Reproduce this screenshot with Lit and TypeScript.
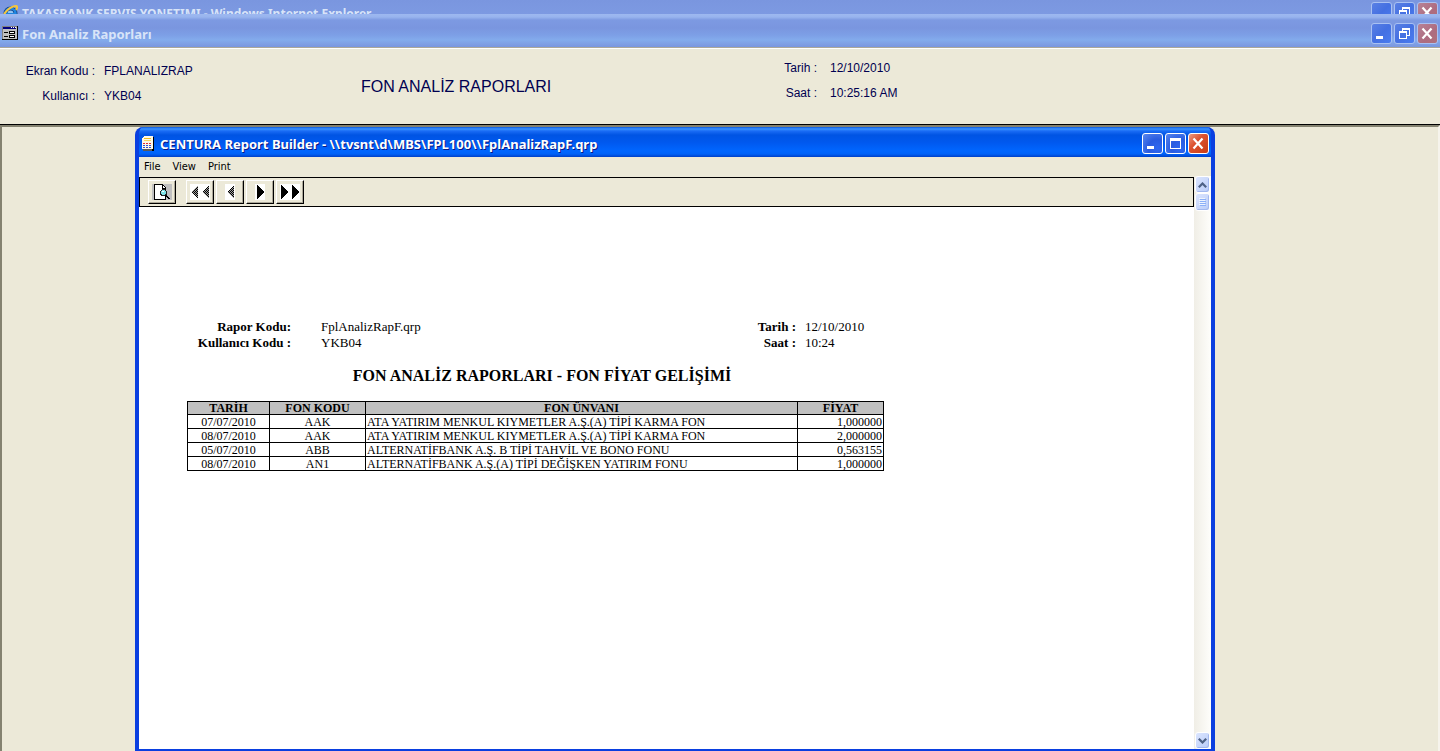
import { LitElement, html, svg, css } from "lit";
import { customElement, property } from "lit/decorators.js";

type Caption = "minimize" | "restore" | "maximize" | "close";

const glyphs = {
  minimize: svg`<rect x="5" y="13" width="7" height="3" fill="#fff"/>`,
  restore: svg`<path d="M8.5 10V6.5h7v6H12M8 5.5h8" fill="none" stroke="#fff"/><path d="M5 9h7v6.5H5z" fill="none" stroke="#fff" /><path d="M4.500 9h8" stroke="#fff" stroke-width="2"/>`,
  maximize: svg`<path d="M5.500 6v9.500h10V6z" fill="none" stroke="#fff"/><path d="M5 6h11" stroke="#fff" stroke-width="3"/>`,
  close: svg`<path d="M5.500 5.500l9 10M14.500 5.500l-9 10" stroke="#fff" stroke-width="2.200" fill="none"/>`,
};

@customElement("caption-button")
class CaptionButton extends LitElement {
  @property() kind: Caption = "minimize";
  @property({ type: Boolean }) inactive = false;

  static styles = css`
    :host { display: block; }
    .button {
      display: block;
      box-sizing: border-box;
      width: 21px;
      height: 21px;
      padding: 0;
      border: 1px solid #fff;
      border-radius: 3px;
      background: radial-gradient(circle at 75% 75%, #2f68f0, #2a5ce0 45%, #5b88ee 100%);
    }
    .button.close { background: linear-gradient(135deg, #ee9a80, #dc5230 40%, #c83c14); }
    .button.inactive { border-color: #a9c1f2; background: linear-gradient(135deg, #5a80e4, #4470e2 50%, #4a7cf0); }
    .button.inactive.close { background: linear-gradient(135deg, #b88396, #ad6c80 60%, #b0707c); }
    .glyph { display: block; margin: -1px; }
  `;

  render() {
    return html`<button
      class="button ${this.kind} ${this.inactive ? "inactive" : ""}"
      aria-label=${this.kind}
    ><svg class="glyph" width="21" height="21" viewBox="0 0 21 21" shape-rendering=${this.kind === "close" ? "auto" : "crispEdges"}>${glyphs[this.kind]}</svg></button>`;
  }
}

const explorerIcon = svg`
  <circle cx="8.500" cy="8.500" r="5" fill="#8fc4f4" stroke="#123f86" stroke-width="4"/>
  <circle cx="8.500" cy="8.500" r="5" fill="none" stroke="#1f86e0" stroke-width="2.600"/>
  <path d="M5 9h9" stroke="#1f86e0" stroke-width="2"/>
  <path d="M1 14C1 8 8 1 14.500 1c1.200 1 .5 2.500-.5 4" fill="none" stroke="#f6c63a" stroke-width="2"/>`;

const formIcon = svg`
  <rect x="0" y="0" width="16" height="14" fill="#000"/>
  <rect x="1" y="1" width="14" height="12" fill="#c0c0c0"/>
  <path d="M0 .5h15M.5 0v13" stroke="#808080"/>
  <rect x="1" y="1" width="13" height="2" fill="#000080"/>
  <path d="M9 1.500h1M11 1.500h1M13 1.500h1" stroke="#fff"/>
  <path d="M2 6.500h4M2 10.500h4" stroke="#000"/>
  <path d="M7.500 5.500h5v2h-5zM7.500 9.500h5v2h-5z" fill="#fff" stroke="#000"/>`;

const reportIcon = svg`
  <path d="M4 1h9v14H4z" fill="#000"/>
  <path d="M2 1h9v14H2z" fill="#5a5a5a"/>
  <path d="M3 0h9v13H1V2z" fill="#fff8e8"/>
  <path d="M3 2.500h7" stroke="#f0c020"/><path d="M3 4.500h7" stroke="#f4d860"/>
  <path d="M2 7.500h8" stroke="#e03030" stroke-dasharray="2 1"/>
  <path d="M2 9.500h8M2 11.500h8" stroke="#3050d0" stroke-dasharray="2 1"/>`;

const previewIcon = svg`
  <rect width="20" height="16" fill="#c0c0c0"/>
  <path d="M2.500.5h8l3 3v12h-11z" fill="#fff" stroke="#000"/>
  <path d="M10.500 1v3h3" fill="none" stroke="#000"/>
  <circle cx="11.500" cy="8.500" r="3" fill="#7fe4e8" stroke="#222"/>
  <path d="M10 8l2-1" stroke="#fff"/>
  <path d="M13.500 11l4 4" stroke="#000" stroke-width="2"/>`;

const left = (x: number, fill: string) => svg`<path d="M${x + 7} 1v14l-7-7z" fill=${fill}/>`;
const right = (x: number) => svg`<path d="M${x} 1v14l7-7z" fill="#000"/>`;

const navigation = [
  { label: "First page", disabled: true, width: 20, art: [left(1, "url(#dither)"), left(12, "url(#dither)")] },
  { label: "Previous page", disabled: true, width: 10, art: [left(2, "url(#dither)")] },
  { label: "Next page", disabled: false, width: 10, art: [right(2)] },
  { label: "Last page", disabled: false, width: 20, art: [right(1), right(12)] },
];

const columns = ["TARİH", "FON KODU", "FON ÜNVANI", "FİYAT"];
const funds = [
  ["07/07/2010", "AAK", "ATA YATIRIM MENKUL KIYMETLER A.Ş.(A) TİPİ KARMA FON", "1,000000"],
  ["08/07/2010", "AAK", "ATA YATIRIM MENKUL KIYMETLER A.Ş.(A) TİPİ KARMA FON", "2,000000"],
  ["05/07/2010", "ABB", "ALTERNATİFBANK A.Ş. B TİPİ TAHVİL VE BONO FONU", "0,563155"],
  ["08/07/2010", "AN1", "ALTERNATİFBANK A.Ş.(A) TİPİ DEĞİŞKEN YATIRIM FONU", "1,000000"],
];

@customElement("report-window")
class ReportWindow extends LitElement {
  static styles = css`
    :host {
      display: flex;
      flex-direction: column;
      box-sizing: border-box;
      border-radius: 8px 8px 0 0;
      border: solid #0a3fe0;
      border-width: 0 4px 2px;
      background: #0a3fe0;
      overflow: hidden;
    }
    .titlebar {
      display: flex;
      align-items: center;
      height: 30px;
      flex: none;
      margin: 0 -4px;
      padding: 2px 6px 0;
      box-sizing: border-box;
      background: linear-gradient(#0a58e0 0, #3a93ff 2px, #1a6cf5 4px, #0054e3 8px, #0058ee 15px, #0066ff 24px, #0062f8 27px, #0040c8 30px);
    }
    .title {
      flex: 1;
      margin: 2px 0 0 4px;
      font: bold 13px/18px "Noto Sans", sans-serif;
      color: #fff;
      text-shadow: 1px 1px #0a1883;
      white-space: nowrap;
    }
    .controls { display: flex; gap: 2px; }
    .menubar { display: flex; flex: none; height: 19px; background: #ece9d8; padding-left: 5px; gap: 12px; }
    .menu { border: 0; padding: 0; background: none; color: #000; font: 11px/18px "DejaVu Sans Condensed", sans-serif; }
    .content { display: flex; flex: 1; min-height: 0; background: #fff; }
    .client { flex: 1; min-width: 0; border-top: 1px solid #ece9d8; }
    .toolbar {
      display: flex;
      align-items: center;
      gap: 2px;
      box-sizing: border-box;
      height: 30px;
      padding: 0 8px;
      border: 1px solid #000;
      background: #ece9d8;
    }
    .tool {
      display: flex;
      align-items: center;
      justify-content: center;
      box-sizing: border-box;
      width: 28px;
      height: 24px;
      padding: 0;
      border: 1px solid;
      border-color: #fff #000 #000 #fff;
      background: #ece9d8;
      box-shadow: inset -1px -1px #aca899;
    }
    .preview { margin-right: 8px; }
    .art { display: block; background: #fff; }
    .report { padding: 112px 0 0 48px; font-family: "Liberation Serif", serif; color: #000; }
    .sheet { width: 697px; }
    .meta { display: grid; grid-template-columns: 104px 1fr 80px 88px; margin: 0; font-size: 13px; line-height: 16px; }
    .meta dt { text-align: right; font-weight: bold; }
    .meta dd { margin: 0; padding-left: 9px; }
    .meta .wide { padding-left: 30px; }
    .heading { margin: 15px 0; padding-left: 13px; font-size: 16px; line-height: 20px; text-align: center; }
    .funds { width: 100%; table-layout: fixed; border-collapse: collapse; font-size: 12px; }
    .funds th, .funds td { box-sizing: border-box; height: 14px; padding: 0 1px; border: 1px solid #000; line-height: 12px; text-align: center; white-space: nowrap; }
    .funds th { height: 13px; background: #c0c0c0; }
    .funds .name { text-align: left; }
    .funds .price { text-align: right; }
    .date-col { width: 82px; }
    .code-col { width: 96px; }
    .price-col { width: 86px; }
    .scrollbar { display: flex; flex-direction: column; flex: none; width: 17px; background: linear-gradient(90deg, #f0eee6, #fefefb); }
    .scroll {
      display: flex;
      align-items: center;
      justify-content: center;
      box-sizing: border-box;
      width: 15px;
      height: 17px;
      margin-left: 1px;
      padding: 0;
      border: 1px solid #fff;
      border-radius: 3px;
      background: linear-gradient(135deg, #dbe5fe, #b9ccf9);
      box-shadow: inset -1px -1px #a2b8ee;
    }
    .thumb { height: 18px; }
    .down { margin-top: auto; }
  `;

  render() {
    return html`
      <header class="titlebar">
        <svg width="15" height="15" viewBox="0 0 15 15" aria-hidden="true" shape-rendering="crispEdges">${reportIcon}</svg>
        <span class="title">CENTURA Report Builder - \\\\tvsnt\\d\\MBS\\FPL100\\\\FplAnalizRapF.qrp</span>
        <div class="controls">
          <caption-button kind="minimize"></caption-button>
          <caption-button kind="maximize"></caption-button>
          <caption-button kind="close"></caption-button>
        </div>
      </header>
      <nav class="menubar">
        ${["File", "View", "Print"].map((name) => html`<button class="menu">${name}</button>`)}
      </nav>
      <div class="content">
        <div class="client">
          <div class="toolbar">
            <button class="tool preview" aria-label="Preview">
              <svg width="20" height="16" viewBox="0 0 20 16" shape-rendering="crispEdges">${previewIcon}</svg>
            </button>
            ${navigation.map(
              (item) => html`<button class="tool" aria-label=${item.label} ?disabled=${item.disabled}>
                <svg class="art" width=${item.width} height="16" viewBox="0 0 ${item.width} 16" shape-rendering="crispEdges">
                  <defs><pattern id="dither" width="2" height="2" patternUnits="userSpaceOnUse"><rect width="2" height="2" fill="#a0a0a0"/><path d="M0 0h1v1H0zM1 1h1v1H1z" fill="#000"/></pattern></defs>
                  ${item.art}
                </svg>
              </button>`
            )}
          </div>
          <main class="report">
            <div class="sheet">
              <dl class="meta">
                <dt>Rapor Kodu:</dt><dd class="wide">FplAnalizRapF.qrp</dd>
                <dt>Tarih :</dt><dd>12/10/2010</dd>
                <dt>Kullanıcı Kodu :</dt><dd class="wide">YKB04</dd>
                <dt>Saat :</dt><dd>10:24</dd>
              </dl>
              <h2 class="heading">FON ANALİZ RAPORLARI - FON FİYAT GELİŞİMİ</h2>
              <table class="funds">
                <colgroup><col class="date-col" /><col class="code-col" /><col /><col class="price-col" /></colgroup>
                <thead><tr>${columns.map((c) => html`<th scope="col">${c}</th>`)}</tr></thead>
                <tbody>
                  ${funds.map(
                    ([date, code, name, price]) => html`<tr>
                      <td>${date}</td><td>${code}</td><td class="name">${name}</td><td class="price">${price}</td>
                    </tr>`
                  )}
                </tbody>
              </table>
            </div>
          </main>
        </div>
        <div class="scrollbar">
          <button class="scroll" aria-label="Scroll up"><svg width="9" height="6" viewBox="0 0 9 6"><path d="M.8 5.200l3.700-3.700 3.700 3.700" fill="none" stroke="#4d6185" stroke-width="2.200"/></svg></button>
          <div class="scroll thumb"><svg width="7" height="8" viewBox="0 0 7 8" shape-rendering="crispEdges"><path d="M0 .5h6M0 2.500h6M0 4.500h6M0 6.500h6" stroke="#eef4fe"/><path d="M1 1.500h6M1 3.500h6M1 5.500h6M1 7.500h6" stroke="#8cb0f8"/></svg></div>
          <button class="scroll down" aria-label="Scroll down"><svg width="9" height="6" viewBox="0 0 9 6"><path d="M.8.8l3.700 3.700L8.200.8" fill="none" stroke="#4d6185" stroke-width="2.200"/></svg></button>
        </div>
      </div>
    `;
  }
}

@customElement("app-root")
class AppRoot extends LitElement {
  static styles = css`
    :host {
      display: flex;
      flex-direction: column;
      height: 100vh;
      overflow: hidden;
      background: #ece9d8;
    }
    .bar {
      display: flex;
      align-items: center;
      flex: none;
      box-sizing: border-box;
      height: 33px;
      padding: 5px 2px 0 2px;
      background: linear-gradient(#9db8f0 0, #98b4ee 3px, #7d9ae2 6px, #7a96df 14px, #7d9fe6 21px, #83abec 26px, #7f9fe4 30px, #7a96df 33px);
      color: #d8e4f8;
      font: bold 13px/18px "Noto Sans", sans-serif;
    }
    .clip { flex: none; height: 14px; overflow: hidden; }
    .clip .bar { height: 25px; padding-top: 0; font-size: 12px; background: linear-gradient(#7a96df, #7d9ae2 16px, #83abec); }
    .bar .title { flex: 1; margin: 2px 0 0 4px; white-space: nowrap; }
    .controls { display: flex; gap: 2px; }
    .info {
      display: grid;
      grid-template-columns: 361px 414px 1fr;
      flex: none;
      box-sizing: border-box;
      height: 78px;
      border-top: 1px solid #aca899;
      border-bottom: 1px solid #000;
      box-shadow: inset 0 1px #fff;
      color: #000050;
      font: 12px/25px "Liberation Sans", sans-serif;
    }
    .pairs { display: grid; align-content: start; margin: 0; }
    .pairs dt { text-align: right; }
    .pairs dd { margin: 0; }
    .screen { grid-template-columns: 95px 1fr; column-gap: 9px; padding-top: 11px; }
    .clock { grid-template-columns: 42px 1fr; column-gap: 13px; padding-top: 8px; }
    .heading { margin: 27px 0 0; font-size: 16px; line-height: 24px; font-weight: normal; white-space: nowrap; }
    .workspace {
      display: flex;
      flex: 1;
      min-height: 0;
      padding: 0 223px 0 133px;
      border: solid #848270;
      border-width: 2px 2px 0;
      border-right-color: #f6f4ec;
    }
    .window { flex: 1; min-width: 0; }
  `;

  render() {
    return html`
      <div class="clip">
        <header class="bar">
          <svg width="16" height="16" viewBox="0 0 16 16" aria-hidden="true">${explorerIcon}</svg>
          <span class="title">TAKASBANK SERVIS YONETIMI - Windows Internet Explorer</span>
          <div class="controls">
            <caption-button inactive kind="minimize"></caption-button>
            <caption-button inactive kind="restore"></caption-button>
            <caption-button inactive kind="close"></caption-button>
          </div>
        </header>
      </div>
      <header class="bar">
        <svg width="16" height="14" viewBox="0 0 16 14" aria-hidden="true" shape-rendering="crispEdges">${formIcon}</svg>
        <span class="title">Fon Analiz Raporları</span>
        <div class="controls">
          <caption-button inactive kind="minimize"></caption-button>
          <caption-button inactive kind="restore"></caption-button>
          <caption-button inactive kind="close"></caption-button>
        </div>
      </header>
      <section class="info">
        <dl class="pairs screen">
          <dt>Ekran Kodu :</dt><dd>FPLANALIZRAP</dd>
          <dt>Kullanıcı :</dt><dd>YKB04</dd>
        </dl>
        <h1 class="heading">FON ANALİZ RAPORLARI</h1>
        <dl class="pairs clock">
          <dt>Tarih :</dt><dd>12/10/2010</dd>
          <dt>Saat :</dt><dd>10:25:16 AM</dd>
        </dl>
      </section>
      <div class="workspace"><report-window class="window"></report-window></div>
    `;
  }
}
